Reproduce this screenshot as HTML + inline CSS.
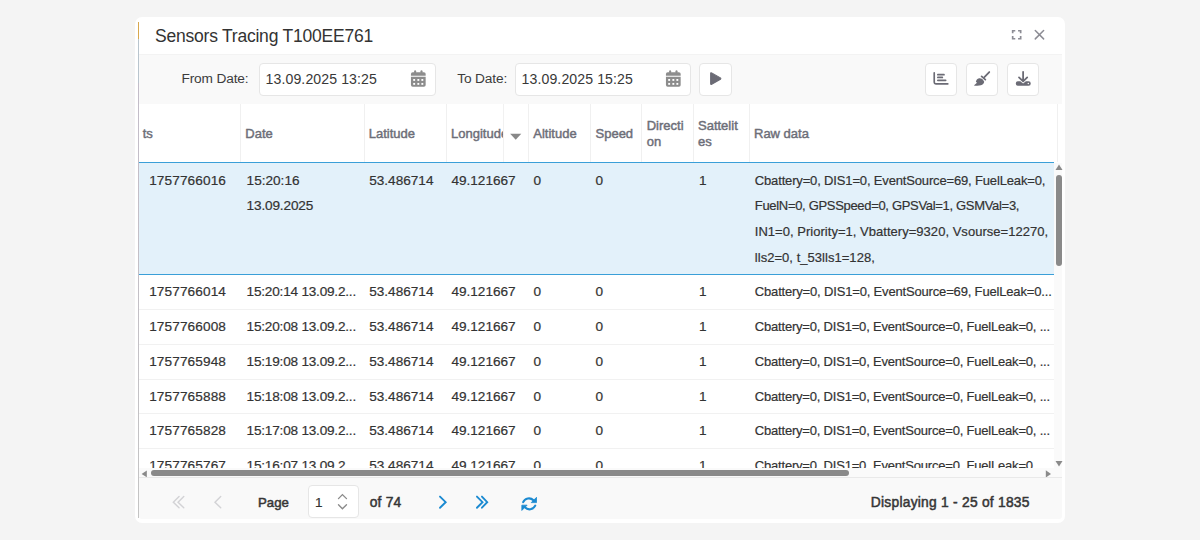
<!DOCTYPE html>
<html><head><meta charset="utf-8">
<style>
*{box-sizing:border-box;margin:0;padding:0}
html,body{width:1200px;height:540px;overflow:hidden;background:#f4f4f4;font-family:"Liberation Sans",sans-serif;color:#333}
.abs{position:absolute}
.t{position:absolute;white-space:nowrap;line-height:16px}
#win{position:absolute;left:135px;top:16.6px;width:930.3px;height:506px;background:#fff;border-radius:7px}
.inp{position:absolute;top:63.3px;height:32.6px;background:#fff;border:1px solid #e6e6e6;border-radius:4px}
.btn{position:absolute;top:63px;width:32px;height:32.6px;background:#fff;border:1px solid #e6e6e6;border-radius:4px}
.lbl{font-size:13.7px;letter-spacing:-0.15px;color:#3c3c3c}
.hdt{font-size:13px;color:#6d6e78;-webkit-text-stroke:0.45px #6d6e78}
.c{font-size:13.6px;color:#333;-webkit-text-stroke:0.2px #333}
.r{font-size:13px;color:#333;-webkit-text-stroke:0.2px #333}
.vl{position:absolute;width:1px;background:#f0f0f0}
.hl{position:absolute;height:1px;background:#f1f1f1}
</style></head><body>
<div id="win"></div>

<div class="abs" style="left:138px;top:22px;width:1px;height:17px;background:#d8a84e"></div>
<div class="abs" style="left:138px;top:39px;width:1px;height:44px;background:#b9c5ce"></div>
<div class="abs" style="left:138px;top:83px;width:1px;height:435px;background:linear-gradient(#c3bdc9,#c4c4c4)"></div>
<div class="t" style="left:155px;top:25.8px;font-size:17.5px;letter-spacing:-0.22px;line-height:20px;color:#333">Sensors Tracing T100EE761</div>
<svg class="abs" style="left:1000px;top:20px" width="60" height="30" viewBox="0 0 1080 540" fill="none" stroke="#8c8c94" stroke-width="27"><path d="M228 240V193H275M325 193H372V240M372 290V337H325M275 337H228V290" stroke-width="30"/><path d="M635 190L785 340M785 190L635 340" stroke-linecap="round"/></svg>
<div class="abs" style="left:139px;top:53.8px;width:923px;height:51px;background:#f9f9f9;border-top:1px solid #f3f3f3;border-bottom:1px solid #f2f2f2"></div>
<div class="t lbl" style="left:181.5px;top:71.3px">From Date:</div>
<div class="inp" style="left:259px;width:177px"></div>
<div class="t" style="left:265.6px;top:70.6px;font-size:14.1px;letter-spacing:0.1px;color:#383838">13.09.2025 13:25</div>
<svg class="abs" style="left:404px;top:63.9px" width="30" height="30" viewBox="0 0 540 540"><g fill="#8c8c8c"><rect x="182" y="112" width="36" height="60" rx="18"/><rect x="297" y="112" width="36" height="60" rx="18"/><path d="M125 182a32 32 0 0 1 32-32h201a32 32 0 0 1 32 32v28H125z"/><path d="M125 228h265v150a32 32 0 0 1-32 32H157a32 32 0 0 1-32-32z"/></g><g fill="#fff"><rect x="166" y="270" width="34" height="34"/><rect x="241" y="270" width="34" height="34"/><rect x="313" y="270" width="34" height="34"/><rect x="166" y="341" width="34" height="34"/><rect x="241" y="341" width="34" height="34"/><rect x="313" y="341" width="34" height="34"/></g></svg>
<div class="t lbl" style="left:457.3px;top:71.3px">To Date:</div>
<div class="inp" style="left:515px;width:176px"></div>
<div class="t" style="left:521.6px;top:70.6px;font-size:14.1px;letter-spacing:0.1px;color:#383838">13.09.2025 15:25</div>
<svg class="abs" style="left:659.3px;top:63.9px" width="30" height="30" viewBox="0 0 540 540"><g fill="#8c8c8c"><rect x="182" y="112" width="36" height="60" rx="18"/><rect x="297" y="112" width="36" height="60" rx="18"/><path d="M125 182a32 32 0 0 1 32-32h201a32 32 0 0 1 32 32v28H125z"/><path d="M125 228h265v150a32 32 0 0 1-32 32H157a32 32 0 0 1-32-32z"/></g><g fill="#fff"><rect x="166" y="270" width="34" height="34"/><rect x="241" y="270" width="34" height="34"/><rect x="313" y="270" width="34" height="34"/><rect x="166" y="341" width="34" height="34"/><rect x="241" y="341" width="34" height="34"/><rect x="313" y="341" width="34" height="34"/></g></svg>
<div class="btn" style="left:699.3px;top:63.3px;width:32.4px"></div>
<svg class="abs" style="left:700px;top:64px" width="30" height="30" viewBox="0 0 540 540"><path d="M192 170Q192 150 210 160L368 250Q382 262 368 274L210 364Q192 374 192 354Z" fill="#6b6b75" stroke="#6b6b75" stroke-width="20" stroke-linejoin="round"/></svg>
<div class="btn" style="left:924.7px;top:63.3px;width:32.4px"></div>
<div class="btn" style="left:965.7px;top:63.3px;width:32.4px"></div>
<div class="btn" style="left:1006.7px;top:63.3px;width:32.4px"></div>
<div class="abs" style="left:139px;top:104px;width:923px;height:374px;background:#fff;overflow:hidden">
</div>
<div class="vl" style="left:240px;top:104px;height:58px"></div>
<div class="vl" style="left:364px;top:104px;height:58px"></div>
<div class="vl" style="left:446px;top:104px;height:58px"></div>
<div class="vl" style="left:528px;top:104px;height:58px"></div>
<div class="vl" style="left:590px;top:104px;height:58px"></div>
<div class="vl" style="left:641px;top:104px;height:58px"></div>
<div class="vl" style="left:693px;top:104px;height:58px"></div>
<div class="vl" style="left:749px;top:104px;height:58px"></div>
<div class="vl" style="left:1057px;top:104px;height:58px"></div>
<div class="vl" style="left:503px;top:104px;height:58px;background:#f1f1f1"></div>
<div class="t hdt" style="left:142.7px;top:125.5px">ts</div>
<div class="t hdt" style="left:245.3px;top:125.5px">Date</div>
<div class="t hdt" style="left:368.8px;top:125.5px">Latitude</div>
<div class="t hdt" style="left:533.3px;top:125.5px">Altitude</div>
<div class="t hdt" style="left:595.5px;top:125.5px">Speed</div>
<div class="t hdt" style="left:754px;top:125.5px">Raw data</div>
<div class="t hdt" style="left:451px;top:125.5px;width:52px;overflow:hidden">Longitude</div>
<svg class="abs" style="left:496px;top:118px" width="40" height="30" viewBox="0 0 720 540"><path d="M255 285H455L355 390Z" fill="#888"/></svg>
<div class="t hdt" style="left:646.7px;top:117.5px">Directi<br>on</div>
<div class="t hdt" style="left:698px;top:117.5px">Sattelit<br>es</div>
<div class="abs" style="left:139px;top:162px;width:915px;height:113px;background:#e3f1fa;border-top:1px solid #3a9fd8;border-bottom:1px solid #3a9fd8"></div>
<div class="t c" style="left:149.2px;top:172.5px"><span style="letter-spacing:0.12px">1757766016</span></div>
<div class="t c" style="left:246.6px;top:172.5px">15:20:16</div>
<div class="t c" style="left:369.2px;top:172.5px">53.486714</div>
<div class="t c" style="left:451.4px;top:172.5px">49.121667</div>
<div class="t c" style="left:533.6px;top:172.5px">0</div>
<div class="t c" style="left:595.6px;top:172.5px">0</div>
<div class="t c" style="left:699px;top:172.5px">1</div>
<div class="t r" style="left:754.8px;top:172.5px"><span style="letter-spacing:-0.156px">Cbattery=0, DIS1=0, EventSource=69, FuelLeak=0,</span></div>
<div class="t c" style="left:246.6px;top:197.5px;letter-spacing:-0.15px">13.09.2025</div>
<div class="t r" style="left:754.8px;top:198.2px;letter-spacing:-0.318px">FuelN=0, GPSSpeed=0, GPSVal=1, GSMVal=3,</div>
<div class="t r" style="left:754.8px;top:223.9px;letter-spacing:0.028px">IN1=0, Priority=1, Vbattery=9320, Vsourse=12270,</div>
<div class="t r" style="left:754.8px;top:249.6px;letter-spacing:0.036px">lls2=0, t_53lls1=128,</div>
<div class="abs" style="left:139px;top:275px;width:915px;height:193.2px;overflow:hidden">
<div class="t c" style="left:10.2px;top:9.40px"><span style="letter-spacing:0.12px">1757766014</span></div>
<div class="t c" style="left:107.6px;top:9.40px"><span style="letter-spacing:-0.21px">15:20:14 13.09.2...</span></div>
<div class="t c" style="left:230.2px;top:9.40px">53.486714</div>
<div class="t c" style="left:312.4px;top:9.40px">49.121667</div>
<div class="t c" style="left:394.6px;top:9.40px">0</div>
<div class="t c" style="left:456.6px;top:9.40px">0</div>
<div class="t c" style="left:560.0px;top:9.40px">1</div>
<div class="t r" style="left:615.8px;top:9.40px"><span style="letter-spacing:-0.167px">Cbattery=0, DIS1=0, EventSource=69, FuelLeak=0...</span></div>
<div class="t c" style="left:10.2px;top:44.15px"><span style="letter-spacing:0.12px">1757766008</span></div>
<div class="t c" style="left:107.6px;top:44.15px"><span style="letter-spacing:-0.21px">15:20:08 13.09.2...</span></div>
<div class="t c" style="left:230.2px;top:44.15px">53.486714</div>
<div class="t c" style="left:312.4px;top:44.15px">49.121667</div>
<div class="t c" style="left:394.6px;top:44.15px">0</div>
<div class="t c" style="left:456.6px;top:44.15px">0</div>
<div class="t c" style="left:560.0px;top:44.15px">1</div>
<div class="t r" style="left:615.8px;top:44.15px"><span style="letter-spacing:-0.197px">Cbattery=0, DIS1=0, EventSource=0, FuelLeak=0, ...</span></div>
<div class="hl" style="left:0;top:34.15px;width:915px"></div>
<div class="t c" style="left:10.2px;top:78.90px"><span style="letter-spacing:0.12px">1757765948</span></div>
<div class="t c" style="left:107.6px;top:78.90px"><span style="letter-spacing:-0.21px">15:19:08 13.09.2...</span></div>
<div class="t c" style="left:230.2px;top:78.90px">53.486714</div>
<div class="t c" style="left:312.4px;top:78.90px">49.121667</div>
<div class="t c" style="left:394.6px;top:78.90px">0</div>
<div class="t c" style="left:456.6px;top:78.90px">0</div>
<div class="t c" style="left:560.0px;top:78.90px">1</div>
<div class="t r" style="left:615.8px;top:78.90px"><span style="letter-spacing:-0.197px">Cbattery=0, DIS1=0, EventSource=0, FuelLeak=0, ...</span></div>
<div class="hl" style="left:0;top:68.90px;width:915px"></div>
<div class="t c" style="left:10.2px;top:113.65px"><span style="letter-spacing:0.12px">1757765888</span></div>
<div class="t c" style="left:107.6px;top:113.65px"><span style="letter-spacing:-0.21px">15:18:08 13.09.2...</span></div>
<div class="t c" style="left:230.2px;top:113.65px">53.486714</div>
<div class="t c" style="left:312.4px;top:113.65px">49.121667</div>
<div class="t c" style="left:394.6px;top:113.65px">0</div>
<div class="t c" style="left:456.6px;top:113.65px">0</div>
<div class="t c" style="left:560.0px;top:113.65px">1</div>
<div class="t r" style="left:615.8px;top:113.65px"><span style="letter-spacing:-0.197px">Cbattery=0, DIS1=0, EventSource=0, FuelLeak=0, ...</span></div>
<div class="hl" style="left:0;top:103.65px;width:915px"></div>
<div class="t c" style="left:10.2px;top:148.40px"><span style="letter-spacing:0.12px">1757765828</span></div>
<div class="t c" style="left:107.6px;top:148.40px"><span style="letter-spacing:-0.21px">15:17:08 13.09.2...</span></div>
<div class="t c" style="left:230.2px;top:148.40px">53.486714</div>
<div class="t c" style="left:312.4px;top:148.40px">49.121667</div>
<div class="t c" style="left:394.6px;top:148.40px">0</div>
<div class="t c" style="left:456.6px;top:148.40px">0</div>
<div class="t c" style="left:560.0px;top:148.40px">1</div>
<div class="t r" style="left:615.8px;top:148.40px"><span style="letter-spacing:-0.197px">Cbattery=0, DIS1=0, EventSource=0, FuelLeak=0, ...</span></div>
<div class="hl" style="left:0;top:138.40px;width:915px"></div>
<div class="t c" style="left:10.2px;top:183.15px"><span style="letter-spacing:0.12px">1757765767</span></div>
<div class="t c" style="left:107.6px;top:183.15px"><span style="letter-spacing:-0.21px">15:16:07 13.09.2...</span></div>
<div class="t c" style="left:230.2px;top:183.15px">53.486714</div>
<div class="t c" style="left:312.4px;top:183.15px">49.121667</div>
<div class="t c" style="left:394.6px;top:183.15px">0</div>
<div class="t c" style="left:456.6px;top:183.15px">0</div>
<div class="t c" style="left:560.0px;top:183.15px">1</div>
<div class="t r" style="left:615.8px;top:183.15px"><span style="letter-spacing:-0.197px">Cbattery=0, DIS1=0, EventSource=0, FuelLeak=0, ...</span></div>
<div class="hl" style="left:0;top:173.15px;width:915px"></div>
</div>
<div class="abs" style="left:1054px;top:163px;width:8px;height:305px;background:#fafafa"></div>
<svg class="abs" style="left:1055px;top:164px" width="8" height="7" viewBox="0 0 8 7"><path d="M4 0.5L7.5 6H0.5z" fill="#8a8a8a"/></svg>
<div class="abs" style="left:1056px;top:175px;width:6px;height:91px;background:#8a8a8a;border-radius:3px"></div>
<svg class="abs" style="left:1055px;top:460px" width="8" height="7" viewBox="0 0 8 7"><path d="M0.5 1H7.5L4 6.5z" fill="#8a8a8a"/></svg>
<div class="abs" style="left:139px;top:468.2px;width:923px;height:9.3px;background:#fafafa"></div>
<svg class="abs" style="left:136px;top:462px" width="30" height="20" viewBox="136 462 30 20"><path d="M141.6 473.9L146.8 470.4V477.3z" fill="#8a8a8a"/></svg>
<div class="abs" style="left:151px;top:470.4px;width:698px;height:5.8px;background:#8a8a8a;border-radius:3px"></div>
<svg class="abs" style="left:1036px;top:455px" width="30" height="27" viewBox="1036 455 30 27"><path d="M1045.8 470.3L1051 473.9L1045.8 477.4z" fill="#8a8a8a"/></svg>
<div class="hl" style="left:139px;top:477px;width:923px;background:#e9e9e9"></div>
<div class="abs" style="left:139px;top:478px;width:923px;height:41px;background:#f9f9f9;border-radius:0 0 3px 3px"></div>
<svg class="abs" style="left:166px;top:488px" width="60" height="30" viewBox="0 0 1080 540" fill="none" stroke="#d3d3d6" stroke-width="26" stroke-linecap="round"><path d="M235 152L132 255L235 355M320 152L217 255L320 355M985 152L882 255L985 355"/></svg>
<div class="t" style="left:258px;top:495px;font-size:13.2px;color:#363636;-webkit-text-stroke:0.5px #363636">Page</div>
<div class="abs" style="left:308.3px;top:485.4px;width:50.6px;height:32.2px;background:#fff;border:1px solid #e6e6e6;border-radius:4px"></div>
<div class="t c" style="left:315px;top:494.6px;font-size:13.6px">1</div>
<svg class="abs" style="left:305px;top:483px" width="60" height="38" viewBox="0 0 853 540" fill="none" stroke="#8a8a8a" stroke-width="19" stroke-linecap="round"><path d="M476 222L532 165L590 222M476 308L532 365L590 308"/></svg>
<div class="t" style="left:369.7px;top:495.4px;font-size:13.8px;letter-spacing:0.2px;color:#363636;-webkit-text-stroke:0.5px #363636">of 74</div>
<svg class="abs" style="left:430px;top:488px" width="60" height="30" viewBox="0 0 1080 540" fill="none" stroke="#1b8ad1" stroke-width="34" stroke-linecap="round"><path d="M180 155L282 255L180 355M845 155L945 255L845 355M935 155L1030 255L935 355"/></svg>
<svg class="abs" style="left:514px;top:488px" width="30" height="30" viewBox="0 0 540 540"><g fill="none" stroke="#1b8ad1" stroke-width="38" stroke-linecap="round"><path d="M165 255A112 112 0 0 1 350 222"/><path d="M382 318A112 112 0 0 1 195 345"/></g><g fill="#1b8ad1" stroke="#1b8ad1" stroke-width="14" stroke-linejoin="round"><path d="M405 168V263H310Z"/><path d="M141 309H236L141 404Z"/></g></svg>
<div class="t" style="left:870.8px;top:495.3px;font-size:13.8px;letter-spacing:0.25px;color:#363636;-webkit-text-stroke:0.5px #363636">Displaying 1 - 25 of 1835</div>
<svg class="abs" style="left:926px;top:64px" width="30" height="30" viewBox="0 0 540 540" fill="none" stroke="#6b6b75" stroke-linecap="round"><path d="M148 158V330Q148 358 176 358H393" stroke-width="30" stroke-linejoin="round"/><path d="M213 192H324M213 242H294M213 295H354" stroke-width="30"/></svg>
<svg class="abs" style="left:968px;top:64px" width="30" height="30" viewBox="0 0 540 540"><path d="M383 145L295 237" stroke="#6b6b75" stroke-width="32" stroke-linecap="round"/><path d="M245 222L312 280" stroke="#6b6b75" stroke-width="32" stroke-linecap="round"/><path d="M105 388C125 362 148 348 165 336L142 322C146 290 166 263 200 256C232 250 256 265 272 287L292 318C286 348 266 374 232 384C192 396 142 392 105 388Z" fill="#6b6b75"/></svg>
<svg class="abs" style="left:1008px;top:64px" width="30" height="30" viewBox="0 0 540 540"><path d="M272 140V295M198 240L272 312L346 240" fill="none" stroke="#6b6b75" stroke-width="32" stroke-linecap="round" stroke-linejoin="round"/><path d="M180 310H222L272 352L322 310H370A40 40 0 0 1 410 350A40 40 0 0 1 370 390H180A40 40 0 0 1 140 350A40 40 0 0 1 180 310Z" fill="#6b6b75"/><circle cx="365" cy="350" r="13" fill="#fff"/></svg>
</body></html>
